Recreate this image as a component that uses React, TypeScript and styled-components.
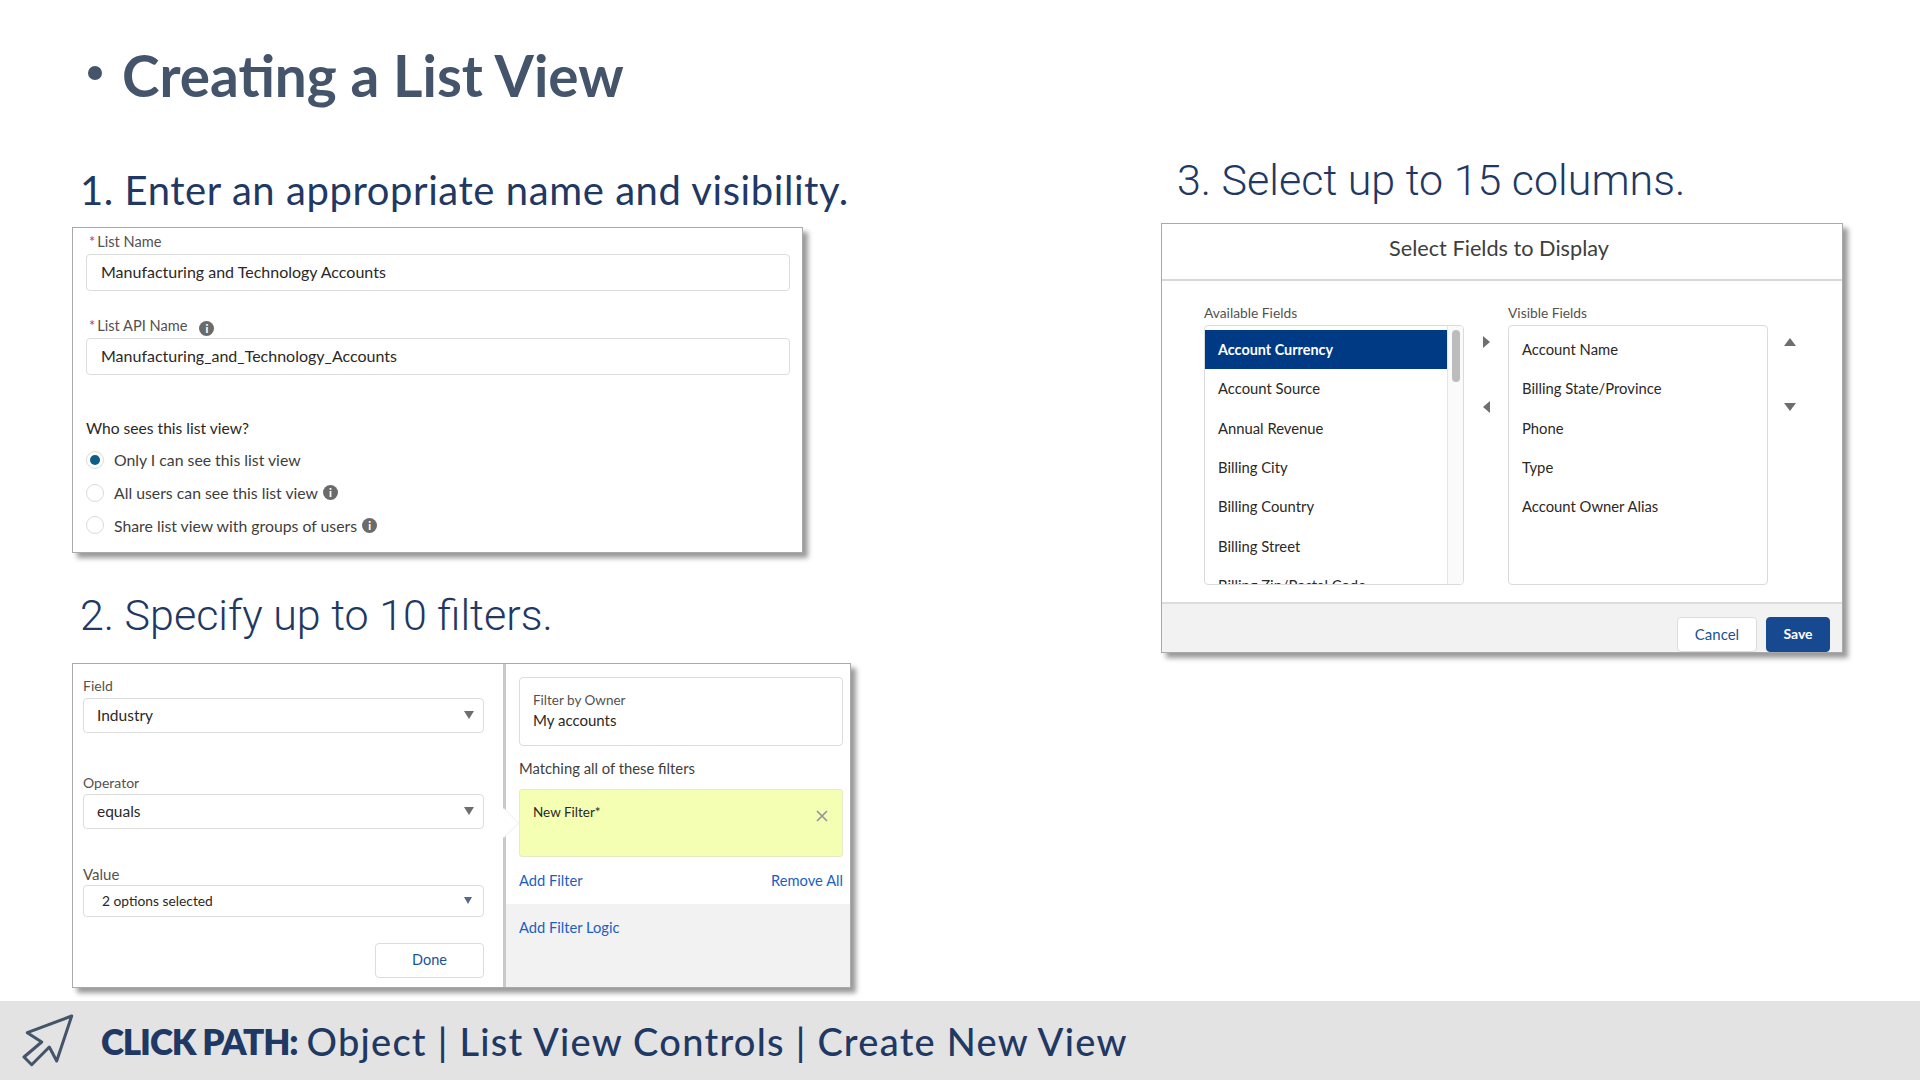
import styled, { createGlobalStyle } from "styled-components"

const GlobalStyle = createGlobalStyle`
	html, body {
		margin: 0;
		padding: 0;
		background: #fff;
	}
	* {
		box-sizing: border-box;
	}
`

const uiFont = `"Lato", "Open Sans", sans-serif`

const Page = styled.div`
	width: 1920px;
	height: 1080px;
	display: flex;
	flex-direction: column;
	overflow: hidden;
	background: #fff;
	font-family: ${uiFont};
	color: #2b2826;
`

const TitleRow = styled.div`
	height: 130px;
	padding: 40px 0 0 88px;
	display: flex;
	align-items: flex-start;
	color: #44546a;
	font-weight: 700;
	font-size: 56.7px;
	line-height: 70px;
`

const Bullet = styled.span`
	width: 14px;
	height: 14px;
	border-radius: 50%;
	background: #44546a;
	margin: 26px 20px 0 0;
`

const Main = styled.div`
	flex: 1;
	display: flex;
	padding-left: 72px;
`

const LeftColumn = styled.div`
	width: 789px;
	display: flex;
	flex-direction: column;
`

const RightColumn = styled.div`
	width: 682px;
	margin-left: 300px;
	display: flex;
	flex-direction: column;
`

const StepHeading = styled.h2<{ $height: number; $light?: boolean; $indent: number; $drop: number }>`
	margin: 0;
	height: ${(p) => p.$height}px;
	padding: ${(p) => p.$drop}px 0 0 ${(p) => p.$indent}px;
	display: flex;
	align-items: center;
	color: #1f3864;
	font-size: ${(p) => (p.$light ? 43 : 40)}px;
	letter-spacing: ${(p) => (p.$light ? 0 : 0.57)}px;
	font-weight: ${(p) => (p.$light ? 300 : 400)};
	font-family: ${(p) => (p.$light ? `"Roboto", sans-serif` : uiFont)};
	white-space: nowrap;
`

const Card = styled.div`
	background: #fff;
	border: 1px solid #a9a9a9;
	box-shadow: 5px 5px 5px rgba(0, 0, 0, 0.4);
`

const NameCard = styled(Card)`
	width: 731px;
	height: 326px;
	margin-top: -1px;
	padding: 2px 12px 0 13px;
`

const Label = styled.div<{ $top?: number }>`
	height: 22px;
	margin-top: ${(p) => p.$top ?? 0}px;
	display: flex;
	align-items: center;
	font-size: 14.6px;
	color: #54514e;
`

const Required = styled.span`
	color: #c23934;
	margin: 0 2px 0 3px;
`

const TextInput = styled.div`
	height: 37px;
	margin-top: 2px;
	padding: 0 0 2px 14px;
	display: flex;
	align-items: center;
	border: 1px solid #dcdcdc;
	border-radius: 4px;
	font-size: 16px;
	color: #2b2826;
`

const Question = styled.div`
	height: 22px;
	margin-top: 42px;
	display: flex;
	align-items: center;
	font-size: 15.6px;
`

const RadioList = styled.div`
	margin-top: 5px;
`

const RadioRow = styled.div`
	height: 32.8px;
	padding-bottom: 1px;
	display: flex;
	align-items: center;
	font-size: 15.8px;
	color: #3e3e3c;
`

const Radio = styled.span<{ $on?: boolean }>`
	width: 18px;
	height: 18px;
	margin-right: 10px;
	border-radius: 50%;
	border: 1px solid #dddbda;
	display: grid;
	place-items: center;
	&::after {
		content: "";
		width: 10px;
		height: 10px;
		border-radius: 50%;
		background: ${(p) => (p.$on ? "#0b5f87" : "transparent")};
	}
`

const Info = styled.span<{ $left: number; $top?: number }>`
	width: 15px;
	height: 15px;
	margin-left: ${(p) => p.$left}px;
	margin-top: ${(p) => p.$top ?? 0}px;
	border-radius: 50%;
	background: #6b6b6b;
	color: #fff;
	font-size: 11px;
	font-weight: 900;
	line-height: 15px;
	text-align: center;
`

const FilterCard = styled(Card)`
	width: 779px;
	height: 325px;
	margin-top: -1px;
	display: flex;
`

const FieldPane = styled.div`
	position: relative;
	width: 433px;
	padding: 10px 19px 0 10px;
	display: flex;
	flex-direction: column;
	border-right: 3px solid #c9c9c9;

	&::after {
		content: "";
		position: absolute;
		top: 144px;
		right: -15px;
		border-style: solid;
		border-width: 15px 0 15px 15px;
		border-color: transparent transparent transparent #fff;
		filter: drop-shadow(1px 0 0 #ececec);
	}
`

const SelectBox = styled.div<{ $height: number; $indent: number; $small?: boolean; $top: number }>`
	height: ${(p) => p.$height}px;
	margin-top: ${(p) => p.$top}px;
	padding: 0 ${(p) => (p.$small ? 11 : 9)}px 2px ${(p) => p.$indent}px;
	display: flex;
	align-items: center;
	justify-content: space-between;
	border: 1px solid #dcdcdc;
	border-radius: 4px;
	font-size: ${(p) => (p.$small ? 13.8 : 15.5)}px;
`

const Caret = styled.span<{ $blue?: boolean }>`
	border-style: solid;
	border-width: ${(p) => (p.$blue ? "7px 4.5px 0" : "8px 5.5px 0")};
	border-color: ${(p) => (p.$blue ? "#54698d" : "#706e6b")} transparent transparent;
`

const PaneLabel = styled.div<{ $top?: number; $size: number }>`
	height: 22px;
	margin-top: ${(p) => p.$top ?? 0}px;
	display: flex;
	align-items: center;
	font-size: ${(p) => p.$size}px;
	color: #54514e;
`

const DoneButton = styled.div`
	align-self: flex-end;
	width: 109px;
	height: 35px;
	margin-top: 26px;
	padding-bottom: 2px;
	display: grid;
	place-items: center;
	border: 1px solid #dcdcdc;
	border-radius: 4px;
	font-size: 14.5px;
	color: #1a5296;
`

const FilterPane = styled.div`
	flex: 1;
	display: flex;
	flex-direction: column;
`

const FilterTop = styled.div`
	padding: 13px 7px 0 13px;
`

const OwnerBox = styled.div`
	height: 69px;
	padding: 12px 0 0 13px;
	border: 1px solid #dcdcdc;
	border-radius: 4px;
`

const OwnerLine = styled.div<{ $muted?: boolean }>`
	height: 20px;
	display: flex;
	align-items: center;
	font-size: ${(p) => (p.$muted ? 13.5 : 15)}px;
	color: ${(p) => (p.$muted ? "#54514e" : "#2b2826")};
`

const MatchingLabel = styled.div`
	height: 22px;
	margin-top: 11px;
	display: flex;
	align-items: center;
	font-size: 14.8px;
	color: #3e3e3c;
`

const NewFilter = styled.div`
	height: 68px;
	margin-top: 10px;
	padding: 11px 14px 0 13px;
	display: flex;
	justify-content: space-between;
	background: #f4ffb4;
	border: 1px solid #e6eac6;
	border-radius: 3px;
	font-size: 13.5px;
	line-height: 22px;
`

const CloseIcon = styled.svg`
	width: 12px;
	height: 12px;
	margin-top: 9px;
	stroke: #8f9496;
	stroke-width: 1.6;
	fill: none;
`

const LinkRow = styled.div`
	height: 22px;
	margin-top: 12px;
	display: flex;
	justify-content: space-between;
	align-items: center;
`

const TextLink = styled.a`
	font-size: 14.7px;
	color: #1b5fc1;
`

const FilterLogic = styled.div`
	flex: 1;
	margin-top: 13px;
	padding: 12px 13px 0;
	background: #f2f2f2;
	line-height: 22px;
`

const FieldsCard = styled(Card)`
	width: 682px;
	height: 430px;
	display: flex;
	flex-direction: column;
`

const ModalHeader = styled.div`
	height: 57px;
	padding: 0 6px 8px 0;
	display: flex;
	align-items: center;
	justify-content: center;
	border-bottom: 2px solid #d8d8d8;
	font-size: 21.7px;
	color: #3e3e3c;
`

const ModalBody = styled.div`
	flex: 1;
	padding: 20px 0 0 42px;
	display: flex;
`

const ListGroup = styled.div`
	width: 260px;
`

const GroupLabel = styled.div`
	height: 22px;
	display: flex;
	align-items: center;
	font-size: 13.8px;
	color: #54514e;
`

const ListBox = styled.div`
	height: 260px;
	margin-top: 2px;
	display: flex;
	overflow: hidden;
	border: 1px solid #dddbda;
	border-radius: 4px;
`

const Rows = styled.div`
	flex: 1;
	padding-top: 4px;
`

const ListRow = styled.div<{ $selected?: boolean }>`
	height: 39.3px;
	padding: 0 0 1px 13px;
	display: flex;
	align-items: center;
	font-size: ${(p) => (p.$selected ? 14.4 : 14.8)}px;
	white-space: nowrap;
	background: ${(p) => (p.$selected ? "#003a85" : "transparent")};
	color: ${(p) => (p.$selected ? "#fff" : "#2b2826")};
	font-weight: ${(p) => (p.$selected ? 700 : 400)};
`

const ScrollTrack = styled.div`
	width: 16px;
	padding: 4px 0 0 4px;
	background: #fafafa;
	border-left: 1px solid #e6e6e6;
`

const ScrollThumb = styled.div`
	width: 8px;
	height: 52px;
	border-radius: 4px;
	background: #bcbcbc;
`

const ArrowColumn = styled.div`
	width: 44px;
	padding-top: 35px;
	display: flex;
	flex-direction: column;
	align-items: center;
	gap: 53px;
`

const ArrowSlot = styled.div`
	height: 12px;
	display: grid;
	place-items: center;
`

const Arrow = styled.span<{ $dir: "left" | "right" | "up" | "down" }>`
	border-style: solid;
	border-width: ${(p) =>
		({
			left: "6px 7px 6px 0",
			right: "6px 0 6px 7px",
			up: "0 6px 8px",
			down: "8px 6px 0",
		})[p.$dir]};
	border-color: transparent;
	border-${(p) => ({ left: "right", right: "left", up: "bottom", down: "top" })[p.$dir]}-color: #706e6b;
`

const ModalFooter = styled.div`
	height: 50px;
	padding: 13px 12px 0 0;
	display: flex;
	justify-content: flex-end;
	gap: 9px;
	background: #f2f2f2;
	border-top: 2px solid #dcdcdc;
`

const FooterButton = styled.div<{ $primary?: boolean }>`
	width: ${(p) => (p.$primary ? 64 : 80)}px;
	height: 35px;
	padding-bottom: 2px;
	display: grid;
	place-items: center;
	border-radius: 4px;
	font-size: ${(p) => (p.$primary ? 14 : 15)}px;
	font-weight: ${(p) => (p.$primary ? 700 : 400)};
	background: ${(p) => (p.$primary ? "#16498f" : "#fff")};
	color: ${(p) => (p.$primary ? "#fff" : "#1a5296")};
	border: 1px solid ${(p) => (p.$primary ? "#16498f" : "#dcdcdc")};
`

const ClickBar = styled.div`
	height: 79px;
	padding-left: 20px;
	display: flex;
	align-items: center;
	background: #e3e3e3;
	color: #1f3864;
	font-size: 38px;
	font-weight: 500;
	letter-spacing: 1.25px;
	white-space: nowrap;
`

const PathIcon = styled.svg`
	width: 56px;
	height: 56px;
	margin-right: 25px;
	fill: none;
	stroke: #44546a;
	stroke-width: 3;
	stroke-linejoin: round;
`

const PathLabel = styled.b`
	font-size: 35px;
	font-weight: 800;
	letter-spacing: -1.1px;
	margin-right: 9px;
`

const available = ["Account Source", "Annual Revenue", "Billing City", "Billing Country", "Billing Street", "Billing Zip/Postal Code"]
const visible = ["Account Name", "Billing State/Province", "Phone", "Type", "Account Owner Alias"]

export default function App() {
	return (
		<Page>
			<GlobalStyle />
			<TitleRow>
				<Bullet />
				Creating a List View
			</TitleRow>
			<Main>
				<LeftColumn>
					<StepHeading $height={98} $indent={8} $drop={22}>
						1. Enter an appropriate name and visibility.
					</StepHeading>
					<NameCard>
						<Label>
							<Required>*</Required>List Name
						</Label>
						<TextInput>Manufacturing and Technology Accounts</TextInput>
						<Label $top={23}>
							<Required>*</Required>List API Name
							<Info $left={12} $top={6}>i</Info>
						</Label>
						<TextInput>Manufacturing_and_Technology_Accounts</TextInput>
						<Question>Who sees this list view?</Question>
						<RadioList>
							<RadioRow>
								<Radio $on />
								Only I can see this list view
							</RadioRow>
							<RadioRow>
								<Radio />
								All users can see this list view
								<Info $left={5}>i</Info>
							</RadioRow>
							<RadioRow>
								<Radio />
								Share list view with groups of users
								<Info $left={5}>i</Info>
							</RadioRow>
						</RadioList>
					</NameCard>
					<StepHeading $height={111} $indent={8} $drop={12} $light>
						2. Specify up to 10 filters.
					</StepHeading>
					<FilterCard>
						<FieldPane>
							<PaneLabel $size={14}>Field</PaneLabel>
							<SelectBox $height={35} $indent={13} $top={2}>
								Industry
								<Caret />
							</SelectBox>
							<PaneLabel $size={14} $top={38}>Operator</PaneLabel>
							<SelectBox $height={35} $indent={13} $top={1}>
								equals
								<Caret />
							</SelectBox>
							<PaneLabel $size={15} $top={34}>Value</PaneLabel>
							<SelectBox $height={32} $indent={18} $top={0} $small>
								2 options selected
								<Caret $blue />
							</SelectBox>
							<DoneButton>Done</DoneButton>
						</FieldPane>
						<FilterPane>
							<FilterTop>
								<OwnerBox>
									<OwnerLine $muted>Filter by Owner</OwnerLine>
									<OwnerLine>My accounts</OwnerLine>
								</OwnerBox>
								<MatchingLabel>Matching all of these filters</MatchingLabel>
								<NewFilter>
									New Filter*
									<CloseIcon viewBox="0 0 12 12">
										<path d="M1 1l10 10M11 1L1 11" />
									</CloseIcon>
								</NewFilter>
								<LinkRow>
									<TextLink>Add Filter</TextLink>
									<TextLink>Remove All</TextLink>
								</LinkRow>
							</FilterTop>
							<FilterLogic>
								<TextLink>Add Filter Logic</TextLink>
							</FilterLogic>
						</FilterPane>
					</FilterCard>
				</LeftColumn>
				<RightColumn>
					<StepHeading $height={93} $indent={16} $drop={6} $light>
						3. Select up to 15 columns.
					</StepHeading>
					<FieldsCard>
						<ModalHeader>Select Fields to Display</ModalHeader>
						<ModalBody>
							<ListGroup>
								<GroupLabel>Available Fields</GroupLabel>
								<ListBox>
									<Rows>
										<ListRow $selected>Account Currency</ListRow>
										{available.map((name) => (
											<ListRow key={name}>{name}</ListRow>
										))}
									</Rows>
									<ScrollTrack>
										<ScrollThumb />
									</ScrollTrack>
								</ListBox>
							</ListGroup>
							<ArrowColumn>
								<ArrowSlot>
									<Arrow $dir="right" />
								</ArrowSlot>
								<ArrowSlot>
									<Arrow $dir="left" />
								</ArrowSlot>
							</ArrowColumn>
							<ListGroup>
								<GroupLabel>Visible Fields</GroupLabel>
								<ListBox>
									<Rows>
										{visible.map((name) => (
											<ListRow key={name}>{name}</ListRow>
										))}
									</Rows>
								</ListBox>
							</ListGroup>
							<ArrowColumn>
								<ArrowSlot>
									<Arrow $dir="up" />
								</ArrowSlot>
								<ArrowSlot>
									<Arrow $dir="down" />
								</ArrowSlot>
							</ArrowColumn>
						</ModalBody>
						<ModalFooter>
							<FooterButton>Cancel</FooterButton>
							<FooterButton $primary>Save</FooterButton>
						</ModalFooter>
					</FieldsCard>
				</RightColumn>
			</Main>
			<ClickBar>
				<PathIcon viewBox="0 0 56 56">
					<path d="M51.7 3 7.3 19.7 21.7 29 4 44l7.7 7.7L29.3 34l7.4 14z" />
				</PathIcon>
				<PathLabel>CLICK PATH:</PathLabel>
				Object | List View Controls | Create New View
			</ClickBar>
		</Page>
	)
}
